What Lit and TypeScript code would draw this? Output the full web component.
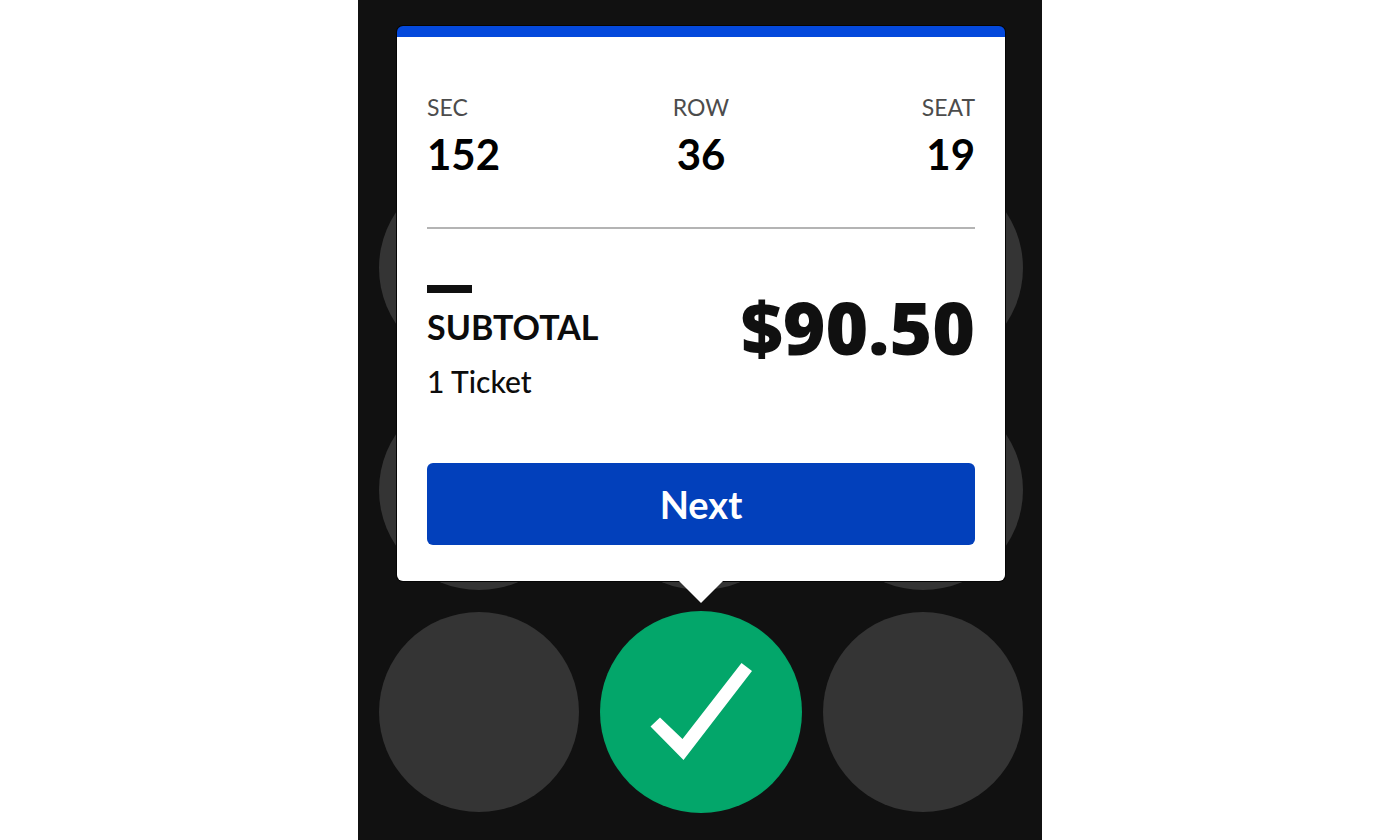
import { LitElement, html, css, nothing } from "lit";
import { customElement, property, state } from "lit/decorators.js";
import { classMap } from "lit/directives/class-map.js";

@customElement("seat-card")
class SeatCard extends LitElement {
  @property() section = "";
  @property() row = "";
  @property() seat = "";
  @property() price = "";

  static styles = css`
    :host {
      display: block;
      box-sizing: border-box;
      border-top: 11px solid #0449dc;
      border-radius: 6px;
      background: #ffffff;
      color: #0c0c0c;
      padding: 56px 30px 36px;
      box-shadow: 0 0 0 1px #050505;
    }
    .place {
      display: grid;
      grid-template-columns: repeat(3, 1fr);
      margin: 0;
      padding-bottom: 45px;
      border-bottom: 2px solid #b4b4b4;
    }
    .field {
      text-align: center;
    }
    .field:first-child {
      text-align: left;
    }
    .field:last-child {
      text-align: right;
    }
    .label {
      font-size: 23px;
      line-height: 28px;
      color: #4c4c4c;
    }
    .value {
      margin: 0;
      font-size: 42px;
      line-height: 56px;
      font-weight: 700;
      padding-top: 5px;
      color: #000000;
    }
    .total {
      display: flex;
      justify-content: space-between;
      align-items: flex-start;
      padding: 56px 0 62px;
    }
    .dash {
      width: 45px;
      height: 8px;
      background: #101010;
    }
    .name {
      margin: 0;
      padding-top: 12px;
      font-size: 34px;
      line-height: 44px;
      font-weight: 700;
    }
    .count {
      margin: 0;
      padding-top: 12px;
      font-size: 30px;
      line-height: 40px;
      font-weight: 500;
    }
    .price {
      margin: 0;
      font-family: "Open Sans", Lato, sans-serif;
      font-size: 73px;
      line-height: 84px;
      font-weight: 800;
      color: #101010;
    }
    .next {
      display: block;
      width: 100%;
      height: 82px;
      border: 0;
      border-radius: 6px;
      background: #0240bb;
      color: #ffffff;
      font: 700 38px/44px Lato, sans-serif;
      cursor: pointer;
    }
    .pointer {
      position: absolute;
      top: 100%;
      left: 50%;
      width: 46px;
      height: 23px;
      margin-left: -23px;
      margin-top: -1px;
      display: block;
    }
  `;

  render() {
    const fields = [
      ["SEC", this.section],
      ["ROW", this.row],
      ["SEAT", this.seat],
    ];
    return html`
      <dl class="place">
        ${fields.map(
          ([label, value]) => html`<div class="field">
            <dt class="label">${label}</dt>
            <dd class="value">${value}</dd>
          </div>`
        )}
      </dl>
      <div class="total">
        <div>
          <div class="dash"></div>
          <h2 class="name">SUBTOTAL</h2>
          <p class="count">1 Ticket</p>
        </div>
        <p class="price">${this.price}</p>
      </div>
      <button class="next" type="button">Next</button>
      <svg class="pointer" viewBox="0 0 46 23" aria-hidden="true">
        <path d="M0 0H46L23 23Z" fill="#fff" />
      </svg>
    `;
  }
}

@customElement("app-root")
class AppRoot extends LitElement {
  @state() selected = 7;

  static styles = css`
    :host {
      display: block;
      min-height: 100vh;
      background: #ffffff;
      font-family: Lato, sans-serif;
    }
    .map {
      position: relative;
      box-sizing: border-box;
      max-width: 684px;
      min-height: 100vh;
      margin: 0 auto;
      padding: 168px 19px 28px 21px;
      background: #111111;
    }
    .seats {
      display: grid;
      grid-template-columns: repeat(3, 1fr);
      gap: 22px;
    }
    .seat {
      aspect-ratio: 1;
      padding: 0;
      border: 0;
      border-radius: 50%;
      background: #343434;
      cursor: pointer;
    }
    .chosen {
      background: #03a66a;
      box-shadow: 0 0 0 1px #03a66a;
    }
    .check {
      display: block;
      width: 100%;
      height: 100%;
    }
    .popup {
      position: absolute;
      left: 39px;
      right: 37px;
      bottom: 259px;
    }
  `;

  render() {
    return html`
      <main class="map">
        <div class="seats">
          ${Array.from({ length: 9 }, (_, i) => {
            const chosen = i === this.selected;
            return html`<button
              class=${classMap({ seat: true, chosen })}
              type="button"
              aria-label="Seat ${i + 12}"
              aria-pressed=${chosen ? "true" : "false"}
            >
              ${chosen
                ? html`<svg class="check" viewBox="0 0 200 200" aria-hidden="true">
                    <path
                      d="M49.5 114.5L59 105.5L81.5 127L140.5 51L151 59L82.5 148Z"
                      fill="#fff"
                    />
                  </svg>`
                : nothing}
            </button>`;
          })}
        </div>
        <seat-card class="popup" section="152" row="36" seat="19" price="$90.50"></seat-card>
      </main>
    `;
  }
}
